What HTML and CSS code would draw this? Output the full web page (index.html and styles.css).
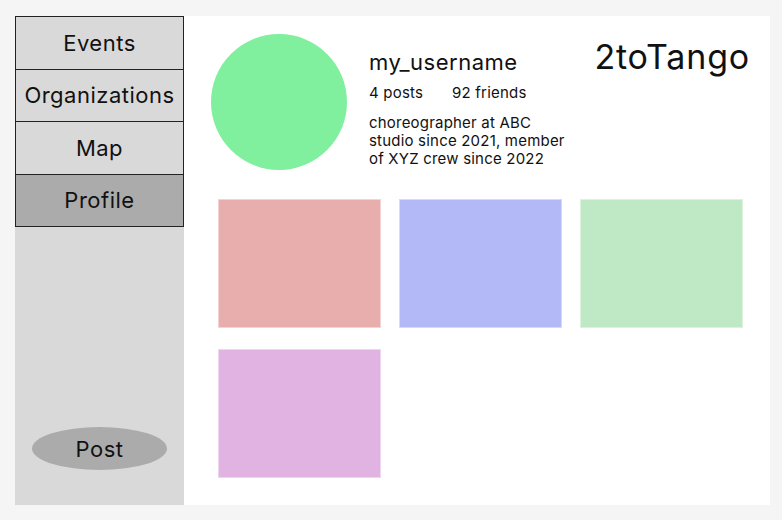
FILE: index.html
```html
<!DOCTYPE html>
<html lang="en">
<head>
    <meta charset="UTF-8">
    <meta name="viewport" content="width=device-width, initial-scale=1.0">
    <title>2toTango - Profile</title>
    <link rel="stylesheet" href="styles.css">
</head>
<body>
    <div class="app">
        <nav class="sidebar">
            <div class="nav-list">
                <a class="nav-item" href="#">Events</a>
                <a class="nav-item" href="#">Organizations</a>
                <a class="nav-item" href="#">Map</a>
                <a class="nav-item active" href="#">Profile</a>
            </div>
            <button class="post-btn">Post</button>
        </nav>

        <main class="main">
            <div class="profile-head">
                <div class="avatar"></div>
                <div class="info">
                    <div class="username">my_username</div>
                    <div class="stats">
                        <span>4 posts</span>
                        <span>92 friends</span>
                    </div>
                    <p class="bio">choreographer at ABC studio since 2021, member of XYZ crew since 2022</p>
                </div>
                <div class="brand">2toTango</div>
            </div>

            <div class="posts">
                <div class="tile tile-red"></div>
                <div class="tile tile-blue"></div>
                <div class="tile tile-green"></div>
                <div class="tile tile-purple"></div>
            </div>
        </main>
    </div>
</body>
</html>
```

FILE: styles.css
```css
body {
    font-family: Inter, "Noto Sans", sans-serif;
    background-color: #f5f5f5;
    color: #111;
    margin: 0;
    padding: 16px 12px 15px 15px;
}

.app {
    display: flex;
    width: 755px;
    height: 489px;
}

/* left navigation */
.sidebar {
    width: 169px;
    background: #d9d9d9;
    display: flex;
    flex-direction: column;
    align-items: center;
    padding-bottom: 35px;
    box-sizing: border-box;
}

.nav-list {
    width: 100%;
    border: 1px solid #222;
    border-bottom: none;
    box-sizing: border-box;
}

.nav-item {
    display: flex;
    align-items: center;
    justify-content: center;
    height: 51.5px;
    border-bottom: 1px solid #222;
    color: #111;
    text-decoration: none;
    font-size: 22px;
    letter-spacing: 0.5px;
}

.nav-item.active {
    background: #ababab;
}

.post-btn {
    margin-top: auto;
    width: 135px;
    height: 43px;
    border: none;
    border-radius: 50%;
    background: #ababab;
    font-family: inherit;
    font-size: 22px;
    letter-spacing: 0.5px;
    color: #111;
    padding: 0;
}

/* profile area */
.main {
    flex: 1;
    background: #fff;
    padding: 18px 20px 0 27px;
}

.profile-head {
    display: flex;
    align-items: flex-start;
}

.avatar {
    width: 136px;
    height: 136px;
    border-radius: 50%;
    background: #80ef9e;
    flex-shrink: 0;
}

.info {
    margin-left: 22px;
    padding-top: 15px;
    width: 204px;
}

.username {
    font-size: 22px;
    line-height: 27px;
    letter-spacing: 0.5px;
}

.stats {
    display: flex;
    gap: 29px;
    font-size: 15px;
    letter-spacing: 0.2px;
    margin-top: 7px;
}

.bio {
    font-size: 15px;
    line-height: 18px;
    letter-spacing: 0.2px;
    margin: 12px 0 0;
}

.brand {
    margin-left: auto;
    margin-top: 2px;
    font-size: 34px;
    letter-spacing: 0.8px;
}

.posts {
    display: grid;
    grid-template-columns: repeat(3, 163px);
    justify-content: space-between;
    row-gap: 21px;
    width: 525px;
    margin: 29px 0 0 7px;
}

.tile {
    height: 129px;
    box-sizing: border-box;
    border: 1px solid;
}

.tile-red {
    background: #e8adad;
    border-color: #f3d3d3;
}

.tile-blue {
    background: #b3b9f6;
    border-color: #d6d9fb;
}

.tile-green {
    background: #bfe8c5;
    border-color: #dcf2df;
}

.tile-purple {
    background: #e1b3e2;
    border-color: #efd6f0;
}
```
